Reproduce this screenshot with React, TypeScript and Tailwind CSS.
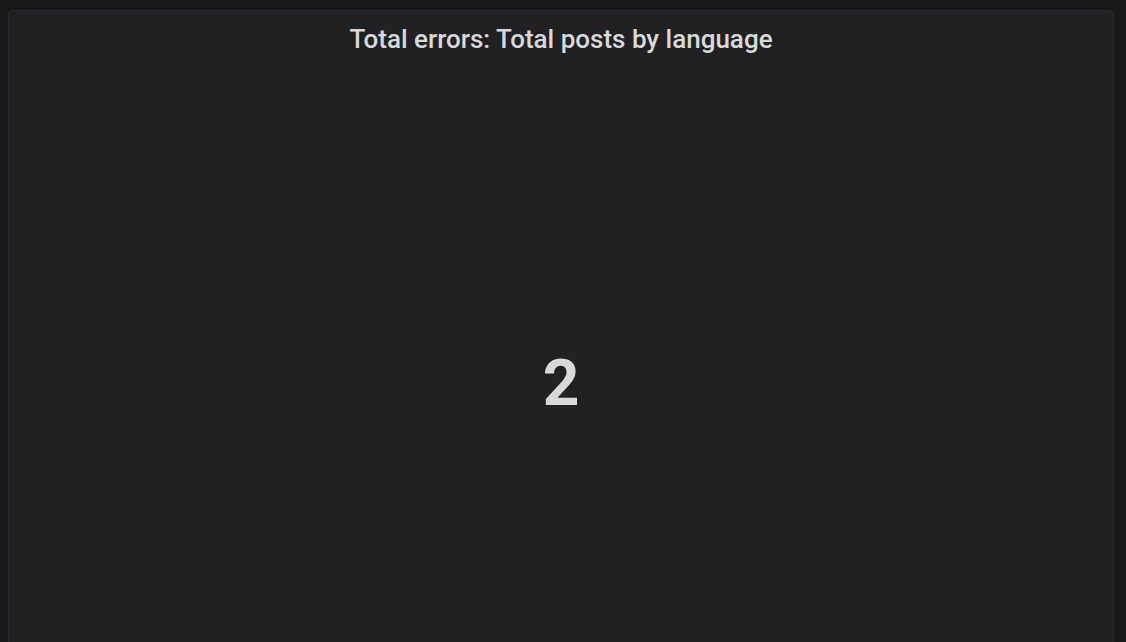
export default function App() {
  return (
    <div className="w-[1126px] h-[642px] bg-[#161719] pt-[10px] pl-[8px] pr-[12px] overflow-hidden" style={{ fontFamily: 'Roboto, "Liberation Sans", sans-serif' }}>
      <div className="h-[650px] w-full bg-[#212124] border border-[#2a2a2e] rounded-[4px] flex flex-col">
        <div className="h-[56px] flex items-center justify-center text-[26px] font-medium text-[#d8d9da]">
          Total errors: Total posts by language
        </div>
        <div className="flex-1 flex items-center justify-center pt-[42px]">
          <span className="text-[64px] font-bold text-[#d8d9da] leading-none">2</span>
        </div>
      </div>
    </div>
  );
}
